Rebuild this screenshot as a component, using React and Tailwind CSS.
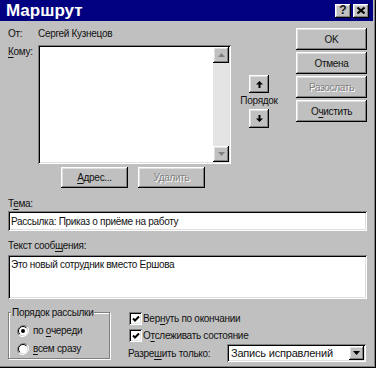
import React from 'react'

const raised =
  'shadow-[inset_-1px_-1px_0_#000,inset_1px_1px_0_#fff,inset_-2px_-2px_0_#808080,inset_2px_2px_0_#dfdfdf]'
const sunken =
  'shadow-[inset_1px_1px_0_#808080,inset_-1px_-1px_0_#fff,inset_2px_2px_0_#000,inset_-2px_-2px_0_#dfdfdf]'

function Btn({ children, className = '', disabled }) {
  return (
    <div
      className={`flex items-center justify-center bg-[#c0c0c0] ${raised} ${className} ${
        disabled ? 'text-[#808080] [text-shadow:1px_1px_0_#fff]' : 'text-[#111]'
      }`}
    >
      {children}
    </div>
  )
}

function U({ children }) {
  return <span className="underline underline-offset-[2px] decoration-1">{children}</span>
}

function Arrow({ dir = 'down', color = '#000', stem }) {
  // small triangle, optionally with a stem (order buttons)
  if (stem) {
    return (
      <svg width="7" height="7" viewBox="0 0 7 7">
        {dir === 'up' ? (
          <path d="M3.5 0 L7 3.5 L4.5 3.5 L4.5 7 L2.5 7 L2.5 3.5 L0 3.5 Z" fill={color} />
        ) : (
          <path d="M3.5 7 L7 3.5 L4.5 3.5 L4.5 0 L2.5 0 L2.5 3.5 L0 3.5 Z" fill={color} />
        )}
      </svg>
    )
  }
  return (
    <svg width="7" height="4" viewBox="0 0 7 4">
      {dir === 'up' ? <path d="M3.5 0 L7 4 L0 4 Z" fill={color} /> : <path d="M0 0 L7 0 L3.5 4 Z" fill={color} />}
    </svg>
  )
}

function Radio({ checked }) {
  return (
    <svg width="12" height="12" viewBox="0 0 12 12" className="shrink-0">
      <path d="M10.2 1.8 A6 6 0 0 0 1.8 10.2" fill="none" stroke="#808080" strokeWidth="1" />
      <path d="M1.8 10.2 A6 6 0 0 0 10.2 1.8" fill="none" stroke="#fff" strokeWidth="1" />
      <circle cx="6" cy="6" r="4.5" fill="#fff" />
      <path d="M9.2 2.8 A4.5 4.5 0 0 0 2.8 9.2" fill="none" stroke="#000" strokeWidth="1" />
      {checked && <circle cx="6" cy="6" r="2" fill="#000" />}
    </svg>
  )
}

function Check() {
  return (
    <div className={`w-[13px] h-[13px] bg-white shrink-0 flex items-center justify-center ${sunken}`}>
      <svg width="8" height="8" viewBox="0 0 8 8">
        <path d="M1 3.5 L3 5.5 L7 1.5" fill="none" stroke="#000" strokeWidth="2" />
      </svg>
    </div>
  )
}

export default function App() {
  return (
    <div
      className="w-[376px] h-[368px] bg-[#c0c0c0] flex flex-col pr-[3px] pb-[2px] text-[10px] tracking-[-0.3px] leading-[13px] text-[#111] shadow-[inset_-1px_-1px_0_#000,inset_-2px_-2px_0_#808080]"
      style={{ fontFamily: '"Liberation Sans", Arial, sans-serif' }}
    >
      {/* Title bar */}
      <div className="h-[21px] bg-[#000080] flex items-center pl-[6px] pr-[4px] tracking-normal">
        <span className="text-white font-bold text-[17px] leading-[20px] flex-1">Маршрут</span>
        <div className={`w-[16px] h-[14px] flex items-center justify-center font-bold text-[12px] bg-[#c0c0c0] ${raised}`}>
          ?
        </div>
        <div className={`w-[16px] h-[14px] ml-[2px] flex items-center justify-center bg-[#c0c0c0] ${raised}`}>
          <svg width="8" height="7" viewBox="0 0 8 7">
            <path d="M0.5 0.5 L7.5 6.5 M7.5 0.5 L0.5 6.5" stroke="#000" strokeWidth="2" />
          </svg>
        </div>
      </div>

      {/* Top part */}
      <div className="flex pl-[8px] mt-[6px]">
        <div className="w-[288px] flex flex-col">
          <div className="flex">
            <span className="w-[30px]">От:</span>
            <span>Сергей Кузнецов</span>
          </div>
          <div className="flex mt-[5px]">
            <span className="w-[30px]">
              <U>К</U>ому:
            </span>
            <div className={`w-[193px] h-[119px] bg-white flex justify-end p-[2px] ${sunken}`}>
              <div className="w-[16px] flex flex-col bg-[#e4e4e4]">
                <Btn className="h-[16px]">
                  <Arrow dir="up" color="#808080" />
                </Btn>
                <div className="flex-1" />
                <Btn className="h-[16px]">
                  <Arrow dir="down" color="#808080" />
                </Btn>
              </div>
            </div>
            <div className="w-[38px] ml-[9px] flex flex-col items-center pt-[30px]">
              <Btn className="w-[20px] h-[18px]">
                <Arrow dir="up" stem />
              </Btn>
              <span className="mt-[1px]">Порядок</span>
              <Btn className="w-[20px] h-[19px] mt-[2px]">
                <Arrow dir="down" stem />
              </Btn>
            </div>
          </div>
          <div className="flex ml-[53px] mt-[3px] gap-[10px]">
            <Btn className="w-[67px] h-[21px]">
              <span>
                <U>А</U>дрес...
              </span>
            </Btn>
            <Btn className="w-[67px] h-[21px]" disabled>
              Удалить
            </Btn>
          </div>
        </div>
        <div className="w-[71px] flex flex-col gap-[2px] pt-[1px]">
          <Btn className="h-[22px]">OK</Btn>
          <Btn className="h-[22px]">Отмена</Btn>
          <Btn className="h-[22px]" disabled>
            Разослать
          </Btn>
          <Btn className="h-[22px]">
            <span>
              О<U>ч</U>истить
            </span>
          </Btn>
        </div>
      </div>

      {/* Subject and message */}
      <div className="flex flex-col pl-[8px] mt-[9px]">
        <span>
          Т<U>е</U>ма:
        </span>
        <div className={`w-[359px] h-[20px] mt-[1px] bg-white flex items-center px-[3px] ${sunken}`}>
          Рассылка: Приказ о приёме на работу
        </div>
        <span className="mt-[8px]">
          Текст сооб<U>щ</U>ения:
        </span>
        <div className={`w-[359px] h-[44px] mt-[3px] bg-white px-[3px] pt-[3px] ${sunken}`}>
          Это новый сотрудник вместо Ершова
        </div>
      </div>

      {/* Bottom part */}
      <div className="flex pl-[8px] mt-[13px]">
        <div className="relative w-[102px] h-[47px] border border-[#808080] shadow-[1px_1px_0_#fff,inset_1px_1px_0_#fff] pl-[8px] pt-[11px] flex flex-col gap-[5px]">
          <span className="absolute left-[2px] top-[-7px] bg-[#c0c0c0] px-[1px]">Порядок рассылки</span>
          <div className="flex items-center gap-[4px]">
            <Radio checked />
            <span>
              по <U>о</U>череди
            </span>
          </div>
          <div className="flex items-center gap-[4px]">
            <Radio />
            <span>
              <U>в</U>сем сразу
            </span>
          </div>
        </div>
        <div className="flex flex-col ml-[19px]">
          <div className="flex items-center gap-[1px] h-[13px]">
            <Check />
            <span>
              Вер<U>н</U>уть по окончании
            </span>
          </div>
          <div className="flex items-center gap-[1px] h-[13px] mt-[4px]">
            <Check />
            <span>
              О<U>т</U>слеживать состояние
            </span>
          </div>
          <div className="flex items-center mt-[2px] -ml-[1px]">
            <span className="w-[99px]">
              Разре<U>ш</U>ить только:
            </span>
            <div className={`w-[139px] h-[18px] bg-white flex items-center p-[2px] ${sunken}`}>
              <span className="flex-1 pl-[2px] text-[11px] tracking-[-0.2px]">Запись исправлений</span>
              <Btn className="w-[15px] h-[14px]">
                <Arrow dir="down" />
              </Btn>
            </div>
          </div>
        </div>
      </div>
    </div>
  )
}
